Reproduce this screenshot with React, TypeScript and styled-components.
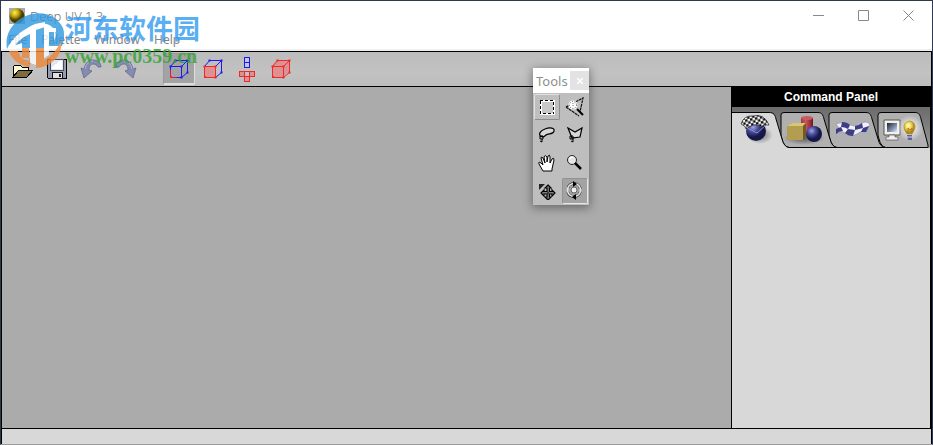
import React from "react";
import styled, { createGlobalStyle, css } from "styled-components";

const GlobalStyle = createGlobalStyle`
  * { box-sizing: border-box; }
  html, body, #root { height: 100%; margin: 0; }
  body { background: #a0a0a0; font-family: "Noto Sans", "Liberation Sans", sans-serif; overflow: hidden; }
  button { font: inherit; color: inherit; border: 0; padding: 0; background: none; }
  svg { display: block; flex: none; }
`;

const ui = css`
  font-family: "Noto Sans", sans-serif;
  font-size: 13px;
  font-weight: 300;
  color: #737373;
`;

const Window = styled.div`
  position: relative;
  height: 100vh;
  display: flex;
  flex-direction: column;
  border: 1px solid #2b3a4f;
  border-bottom-color: #9b9b9b;
`;

const Header = styled.header`
  ${ui}
  background: #fff;
  height: 50px;
  flex: none;
  border-bottom: 2px solid #f0f0f0;
`;

const TitleBar = styled.div`
  display: flex;
  align-items: center;
  height: 29px;
  padding: 0 1px 0 8px;
`;

const Title = styled.h1`
  font: inherit;
  margin: 0 auto 0 5px;
`;

const Caption = styled.button`
  width: 45px;
  height: 29px;
  display: grid;
  place-items: center;
`;

const Menus = styled.nav`
  display: flex;
  gap: 14px;
  padding-left: 7px;
  height: 20px;
  font-size: 12px;
  font-weight: 400;
  color: #858585;
  button { line-height: 20px; }
`;

const Frame = styled.div`
  flex: 1;
  min-height: 0;
  display: flex;
  flex-direction: column;
  border: 1px solid #000;
  border-bottom: 0;
`;

const Toolbar = styled.div`
  display: flex;
  gap: 2px;
  height: 35px;
  flex: none;
  padding: 1px 5px;
  background: linear-gradient(#bcbcbc, #c2c2c2 60%, #bdbdbd);
  border-bottom: 1px solid #000;
`;

const ToolButton = styled.button<{ $active?: boolean }>`
  width: 32px;
  height: 32px;
  display: grid;
  place-items: center;
  border-radius: 2px;
  ${(p) => p.$active && css`
    background: #a3a3a3;
    border: 1px solid #999;
    border-right-color: #ddd;
    border-bottom: 2px solid #ddd;
  `}
`;

const Spacer = styled.span`
  width: 18px;
`;

const Body = styled.div`
  flex: 1;
  min-height: 0;
  display: flex;
`;

const Canvas = styled.main`
  flex: 1;
  background: #ababab;
`;

const Panel = styled.aside`
  width: 200px;
  background: #d8d8d8;
  border: solid #000;
  border-width: 0 1px;
`;

const PanelTitle = styled.h2`
  margin: 0;
  height: 20px;
  font: bold 12px/20px "Liberation Sans", sans-serif;
  color: #fff;
  background: #000;
  text-align: center;
`;

const TabList = styled.div`
  display: grid;
  grid-template-columns: 48px 48px 49px 53px;
  height: 41px;
  background: linear-gradient(#6c6c6c, #777 30%, #999);
  overflow: hidden;
`;

const Tab = styled.button<{ $level: number }>`
  position: relative;
  z-index: ${(p) => p.$level};
  height: 41px;
  svg { overflow: visible; }
`;

const Status = styled.footer`
  height: 16px;
  flex: none;
  border-top: 1px solid #000;
  background: #d8d8d8;
`;

const Palette = styled.section`
  position: absolute;
  left: 532px;
  top: 67px;
  background: #bebebe;
  box-shadow: 0 2px 9px 1px rgba(0, 0, 0, 0.38);
`;

const PaletteTitle = styled.div`
  ${ui}
  font-weight: 400;
  color: #8f8f8f;
  display: flex;
  align-items: center;
  justify-content: space-between;
  height: 25px;
  padding-left: 3px;
  background: #fff;
`;

const PaletteClose = styled.button`
  width: 19px;
  height: 19px;
  display: grid;
  place-items: center;
  background: #e3e3e3;
`;

const PaletteGrid = styled.div`
  display: grid;
  grid-template-columns: 26px 26px;
  grid-auto-rows: 26px;
  gap: 2px;
  padding: 1px;
`;

const PaletteTool = styled.button<{ $look?: "raised" | "pressed" }>`
  display: grid;
  place-items: center;
  border: 1px solid transparent;
  border-radius: 2px;
  ${(p) => p.$look === "raised" && css`
    border-color: #e0e0e0 #8d8d8d #8d8d8d #e0e0e0;
  `}
  ${(p) => p.$look === "pressed" && css`
    background: #a3a3a3;
    border-color: #929292 #e6e6e6 #e6e6e6 #929292;
  `}
`;

const Watermark = styled.div`
  position: absolute;
  left: 4px;
  top: 9px;
  display: flex;
  pointer-events: none;
`;

const Brand = styled.div`
  display: flex;
  flex-direction: column;
`;

const BrandName = styled.span`
  font: bold 27px/36px "Noto Sans CJK SC", sans-serif;
  color: rgba(45, 153, 239, 0.78);
`;

const BrandUrl = styled.span`
  font: bold 20px/20px "Liberation Serif", serif;
  color: rgba(45, 162, 45, 0.78);
`;

const Logo = () => (
  <svg width="60" height="60" viewBox="0 0 60 60" opacity="0.8">
    <path d="M2 39C-1 22 10 8 27 4C41 1 53 7 58 18C60 24 59 31 57 36H46C51 30 53 22 47 17C41 12 33 13 25 17C14 22 6 30 2 39Z" fill="#2f98df" />
    <path d="M8 36C13 30 18 26 26 23V38H17V33Z" fill="#2f98df" />
    <path d="M31 19L39 16V38H31Z" fill="#2f98df" />
    <path d="M43 20H49V36H43Z" fill="#2f98df" />
    <path d="M4 41H13C15 47 18 50 24 52V38H17V48H25V57C15 56 7 50 4 41Z" fill="#ef8636" />
    <path d="M31 38H39V50C46 47 52 40 56 31C58 45 47 57 31 58Z" fill="#ef8636" />
    <path d="M3 38C8 28 17 20 30 14L40 12V17L31 20V55L25 53V24C18 27 11 32 9 38Z" fill="#fff" />
    <path d="M39 18H51V22H44V45L39 48Z" fill="#fff" />
  </svg>
);

const Folder = () => (
  <svg width="22" height="20" viewBox="0 0 22 20" shapeRendering="crispEdges">
    <path d="M9 4L12 1H15L18 4M18 1V4H15" fill="none" stroke="#a39cb0" />
    <path d="M1 17V8L3 6H8L10 8H16V11" fill="#fbfad1" stroke="#000" />
    <path d="M1 18L7 11H21L15 18Z" fill="#7d6c3d" stroke="#000" />
  </svg>
);

const Disk = () => (
  <svg width="20" height="20" viewBox="0 0 20 20" shapeRendering="crispEdges">
    <path d="M.5 .5H19.500V19.500H1.500L.5 18.500Z" fill="#969bb0" stroke="#000" />
    <path d="M3.500 .5H16.500V11.500H3.500Z" fill="#dfe8f2" stroke="#4a4c5c" />
    <path d="M5 8L13 2H15V10H5Z" fill="#fff" />
    <path d="M5.500 13.500H15.500V19.500H5.500Z" fill="#e1e1e1" stroke="#111" />
    <path d="M12 15H14V18H12Z" fill="#222" />
  </svg>
);

const Turn = ({ redo }: { redo?: boolean }) => (
  <svg width="22" height="20" viewBox="0 0 22 20" overflow="visible">
    <g transform={redo ? "translate(23 0) scale(-1 1)" : undefined}>
      <path d="M1 9L4 10C5 4 9 1 13 1C18 1 21 4 21 8L18 8C17 6 15 5 13 5C11 5 9 7 9 11L12 12L4 19Z" fill="#858bb2" stroke="#64698c" strokeWidth=".8" />
      <path d="M5 10C6 5 9 2 13 2" fill="none" stroke="#b3b7d1" />
    </g>
  </svg>
);

const BLUE = "#1a1af5";
const RED = "#f22727";

const Cube = ({ kind }: { kind: "edge" | "face" | "solid" }) => {
  const outer = kind === "solid" ? RED : BLUE;
  const front = kind === "edge" ? BLUE : RED;
  const corners = [[1, 7], [12, 7], [12, 18], [6, 1], [18, 1], [18, 13]];
  return (
    <svg width="20" height="20" viewBox="0 0 20 20">
      {kind === "solid" && <path d="M1 7L6 1H18V13L12 18H1Z" fill="#dc9292" />}
      <path d="M1.500 7.500L6.500 1.500H18.500V13.500L12.500 18.500M12.500 7.500L18.500 1.500" fill="none" stroke={outer} />
      <path d="M1.500 7.500H12.500V18.500H1.500Z" fill={kind === "edge" ? "none" : "#dc9292"} stroke={front} />
      {kind === "edge" && <path d="M1.500 11V18.500H8" fill="none" stroke="#d01a60" />}
      {corners.map(([x, y], i) => (
        <rect key={i} x={x - 0.5} y={y - 0.5} width="2" height="2" fill={i < 3 ? front : outer} />
      ))}
      <rect x="1" y="17" width="2" height="2" fill={RED} />
    </svg>
  );
};

const Unfold = () => (
  <svg width="18" height="27" viewBox="0 0 18 27" shapeRendering="crispEdges">
    <path d="M6.500 1.500H11.500V11.500H6.500ZM6.500 6.500H11.500" fill="#c5c5e0" stroke={BLUE} />
    <path d="M1.500 15.500H16.500V20.500H11.500V25.500H6.500V20.500H1.500ZM6.500 15.500V20.500H11.500V15.500M6.500 20.500H11.500" fill="#dc9292" stroke={RED} />
  </svg>
);

const Marquee = () => (
  <svg width="16" height="16" viewBox="0 0 16 16" shapeRendering="crispEdges">
    <path d="M1.500 1.500H14.500V14.500H1.500Z" fill="#c8c8c8" stroke="#fff" strokeWidth="2" />
    <path d="M1.500 1.500H14.500V14.500H1.500Z" fill="none" stroke="#000" strokeDasharray="3 2" strokeDashoffset="1" />
  </svg>
);

const Wand = () => (
  <svg width="20" height="20" viewBox="0 0 20 20">
    <path d="M1 10L18 1L15 15M1 10L14 19" fill="none" stroke="#111" strokeWidth="1.200" strokeDasharray="3 .6" />
    <circle cx="8" cy="8" r="4.500" fill="#fff" />
    <circle cx="8" cy="8" r="3.500" fill="none" stroke="#555" strokeDasharray="1 1.500" />
    <path d="M8 6V10" stroke="#777" strokeDasharray="1 1" />
    <path d="M12 12L18 18" stroke="#000" strokeWidth="2" />
  </svg>
);

const Lasso = () => (
  <svg width="18" height="18" viewBox="0 0 18 18">
    <path d="M3 11C0 8 2 5 7 3C12 1 17 2 16 5C15 9 10 7 8 9C6 11 4 11 3 10" fill="#d7d7d7" stroke="#000" strokeWidth="1.200" />
    <path d="M2 10H5V13H2ZM4 13V16L2 15" fill="none" stroke="#000" />
  </svg>
);

const PolyLasso = () => (
  <svg width="18" height="18" viewBox="0 0 18 18">
    <path d="M2 2L9 6L16 2L14 11L6 12Z" fill="#d7d7d7" stroke="#000" strokeWidth="1.200" />
    <path d="M4 10H7V13H4ZM7 12V16L5 15" fill="none" stroke="#000" />
  </svg>
);

const Hand = () => (
  <svg width="18" height="18" viewBox="0 0 18 18">
    <path d="M5 17L1 10Q0 7 3 9L5 11L3 4Q3 2 5 4L7 9L6 3Q7 0 9 3V8L10 2Q12 0 12 3V9L14 5Q16 3 16 6L14 15V17Z" fill="#fff" stroke="#000" />
  </svg>
);

const Magnifier = () => (
  <svg width="18" height="18" viewBox="0 0 18 18">
    <circle cx="6" cy="6" r="4.500" fill="#e5e5e5" stroke="#222" />
    <path d="M4 5Q4 3 7 3" stroke="#fff" strokeWidth="1.500" fill="none" />
    <path d="M9 9L15 15" stroke="#000" strokeWidth="2.500" />
  </svg>
);

const Move = () => (
  <svg width="18" height="18" viewBox="0 0 18 18">
    <path d="M1 2H7L1 8Z" fill="#222" />
    <path d="M10 3L13 6H11.500V9.500H14V8L17 11L14 14V12H11.500V15H13L10 18L7 15H9V12H6V14L3 11L6 8V9.500H9V6H7Z" fill="#fff" stroke="#000" strokeWidth="1.200" />
    <path d="M10 4V17M4 11H16" stroke="#000" />
  </svg>
);

const Rotate = () => (
  <svg width="20" height="22" viewBox="0 0 20 22">
    <circle cx="9" cy="10" r="6.500" fill="none" stroke="#222" strokeWidth="2.600" strokeDasharray="16 4.400" strokeDashoffset="-2" />
    <circle cx="9" cy="10" r="6.500" fill="none" stroke="#e2e2e2" strokeWidth="1.600" />
    <circle cx="9" cy="10" r="3" fill="#eee" stroke="#666" />
    <path d="M8 1L12 4L8 7ZM11 14L7 17L11 20Z" fill="#000" />
  </svg>
);

const TabShape = ({ children, active, last }: { children: React.ReactNode; active?: boolean; last?: boolean }) => (
  <svg width="48" height="41" viewBox="0 0 48 41">
    {active ? (
      <>
        <path d="M0 5.500H37C42 5.500 43 8 44 12L50 32Q52 40 57 41H0Z" fill="#d8d8d8" />
        <path d="M0 5.500H37C42 5.500 43 8 44 12L50 32Q52 40 57 40.500" fill="none" stroke="#000" />
      </>
    ) : (
      <path
        d={last
          ? "M1 28V8Q1 5.500 4 5.500H38C42 5.500 43 8 44 12L51 38V40.500H9Q4 40 2 32Z"
          : "M1 28V8Q1 5.500 4 5.500H38C42 5.500 43 8 44 12L50 32Q52 40 57 40.500H9Q4 40 2 32Z"}
        fill="#b0b0b0" stroke="#000"
      />
    )}
    {children}
  </svg>
);

const Defs = () => (
  <defs>
    <radialGradient id="orb" cx="35%" cy="30%">
      <stop offset="0" stopColor="#a2a5e3" /><stop offset=".5" stopColor="#4b4e9c" /><stop offset="1" stopColor="#17184a" />
    </radialGradient>
    <radialGradient id="bulb" cx="40%" cy="35%">
      <stop offset="0" stopColor="#fffce0" /><stop offset=".6" stopColor="#ead53c" /><stop offset="1" stopColor="#b48a20" />
    </radialGradient>
    <radialGradient id="glow">
      <stop offset="0" stopColor="#fff" /><stop offset="1" stopColor="#fff" stopOpacity="0" />
    </radialGradient>
    <radialGradient id="shade">
      <stop offset="0" stopOpacity=".5" /><stop offset="1" stopOpacity="0" />
    </radialGradient>
    <linearGradient id="can">
      <stop offset="0" stopColor="#a23540" /><stop offset=".4" stopColor="#cf5560" /><stop offset="1" stopColor="#6e1822" />
    </linearGradient>
    <linearGradient id="screen" x2="1" y2="1">
      <stop offset="0" stopColor="#1b2130" /><stop offset=".6" stopColor="#8490ad" /><stop offset="1" stopColor="#e6ecff" />
    </linearGradient>
    <pattern id="check" width="5" height="5" patternUnits="userSpaceOnUse" patternTransform="rotate(-12)">
      <rect width="5" height="5" fill="#fff" /><path d="M0 0H2.500V5H5V2.500H0Z" fill="#111" />
    </pattern>
  </defs>
);

const Cloth = () => (
  <TabShape active>
    <Defs />
    <ellipse cx="28" cy="28" rx="13" ry="9" fill="url(#shade)" />
    <circle cx="24" cy="24" r="10" fill="url(#orb)" />
    <path d="M15 21L25 26L34 18" fill="none" stroke="#8a8cd0" />
    <path d="M9 17Q12 8 21 9Q32 6 37 18Q31 17 29 20Q24 16 19 19L14 22Q14 19 9 17Z" fill="url(#check)" stroke="#222" strokeWidth=".7" />
  </TabShape>
);

const Solids = () => (
  <TabShape>
    <ellipse cx="24" cy="31" rx="21" ry="7" fill="url(#shade)" />
    <path d="M21 11V29H33V11Z" fill="url(#can)" /><ellipse cx="27" cy="11" rx="6" ry="2" fill="#c95a62" />
    <path d="M7 19L13 16H26L23 19V33H7Z" fill="#b39d50" /><path d="M7 19L13 16H26L23 19Z" fill="#d9c66f" />
    <path d="M23 19L26 16V29L23 33Z" fill="#6f5b25" />
    <circle cx="34" cy="27" r="8" fill="url(#orb)" />
  </TabShape>
);

const Flag = () => (
  <TabShape>
    <path d="M8 17Q14 14 20 17Q29 21 33 17Q37 13 42 17L38 25Q33 23 29 27Q22 31 17 26Q13 23 8 27L11 21Z" fill="#f0f0f8" stroke="#8587ac" strokeWidth=".6" />
    <path d="M14 15Q19 15 22 18L20 22Q17 20 13 20ZM8 22L13 20L15 24Q11 24 8 27ZM20 22L27 23L25 29Q20 29 17 26ZM27 19Q31 19 34 16L35 21L27 23ZM35 21L41 19L38 25L33 25Z" fill="#3b3d86" />
  </TabShape>
);

const Display = () => (
  <TabShape last>
    <path d="M7 13H23V28H7Z" fill="#f1f1eb" stroke="#555" /><path d="M10 16H20V25H10Z" fill="url(#screen)" />
    <path d="M12 28H18V30H21V33H9V30H12Z" fill="#eee" stroke="#555" strokeWidth=".7" />
    <circle cx="33" cy="21" r="13" fill="url(#glow)" />
    <path d="M30 27Q26 22 27 18Q29 14 33 14Q38 15 38 20Q38 23 35 27Z" fill="url(#bulb)" stroke="#a9822a" strokeWidth=".6" />
    <path d="M31 26L31 21L33 23L35 21V26" fill="none" stroke="#af7b26" /><path d="M30 28H35V33H31Z" fill="#5c6593" /><path d="M30 30H35" stroke="#d0d5eb" />
  </TabShape>
);

const files = [
  { label: "Open", icon: <Folder /> },
  { label: "Save", icon: <Disk /> },
  { label: "Undo", icon: <Turn /> },
  { label: "Redo", icon: <Turn redo /> },
];
const views = [
  { label: "Edges", icon: <Cube kind="edge" />, active: true },
  { label: "Faces", icon: <Cube kind="face" /> },
  { label: "Unfold", icon: <Unfold /> },
  { label: "Solid", icon: <Cube kind="solid" /> },
];
const tools: { label: string; icon: React.ReactNode; look?: "raised" | "pressed" }[] = [
  { label: "Marquee", icon: <Marquee />, look: "raised" },
  { label: "Wand", icon: <Wand /> },
  { label: "Lasso", icon: <Lasso /> },
  { label: "Polygon lasso", icon: <PolyLasso /> },
  { label: "Pan", icon: <Hand /> },
  { label: "Zoom", icon: <Magnifier /> },
  { label: "Move", icon: <Move /> },
  { label: "Rotate", icon: <Rotate />, look: "pressed" },
];
const tabs = [
  { label: "Mapping", icon: <Cloth /> },
  { label: "Objects", icon: <Solids /> },
  { label: "Texture", icon: <Flag /> },
  { label: "Display", icon: <Display /> },
];

export default function App() {
  return (
    <>
      <GlobalStyle />
      <Window>
        <Header>
          <TitleBar>
            <svg width="16" height="16" viewBox="0 0 16 16">
              <defs>
                <radialGradient id="gold" cx="35%" cy="28%">
                  <stop offset="0" stopColor="#ffee58" /><stop offset=".5" stopColor="#c5a90a" /><stop offset="1" stopColor="#4b3d00" />
                </radialGradient>
              </defs>
              <rect width="16" height="16" fill="#aaa" />
              <circle cx="8" cy="8" r="7.500" fill="url(#gold)" />
            </svg>
            <Title>Deep UV 1.3</Title>
            <Caption aria-label="Minimize"><svg width="11" height="11" stroke="#888"><path d="M0 5.500H11" /></svg></Caption>
            <Caption aria-label="Maximize"><svg width="11" height="11" stroke="#888" fill="none"><path d="M.5 .5H10.500V10.500H.5Z" /></svg></Caption>
            <Caption aria-label="Close"><svg width="11" height="11" stroke="#888"><path d="M.5 .5L10.500 10.500M10.500 .5L.5 10.500" /></svg></Caption>
          </TitleBar>
          <Menus>
            {["File", "Palette", "Window", "Help"].map((m) => <button key={m}>{m}</button>)}
          </Menus>
        </Header>
        <Frame>
          <Toolbar role="toolbar">
            {files.map((b) => <ToolButton key={b.label} aria-label={b.label}>{b.icon}</ToolButton>)}
            <Spacer />
            {views.map((b) => <ToolButton key={b.label} aria-label={b.label} $active={b.active}>{b.icon}</ToolButton>)}
          </Toolbar>
          <Body>
            <Canvas />
            <Panel>
              <PanelTitle>Command Panel</PanelTitle>
              <TabList role="tablist">
                {tabs.map((t, i) => (
                  <Tab key={t.label} role="tab" aria-label={t.label} aria-selected={i === 0} $level={4 - i}>{t.icon}</Tab>
                ))}
              </TabList>
            </Panel>
          </Body>
          <Status />
        </Frame>
        <Palette>
          <PaletteTitle>
            <span>Tools</span>
            <PaletteClose aria-label="Close tools">
              <svg width="6" height="6" stroke="#fff" strokeWidth="1.500"><path d="M0 0L6 6M6 0L0 6" /></svg>
            </PaletteClose>
          </PaletteTitle>
          <PaletteGrid>
            {tools.map((t) => <PaletteTool key={t.label} aria-label={t.label} $look={t.look}>{t.icon}</PaletteTool>)}
          </PaletteGrid>
        </Palette>
        <Watermark>
          <Logo />
          <Brand>
            <BrandName>河东软件园</BrandName>
            <BrandUrl>www.pc0359.cn</BrandUrl>
          </Brand>
        </Watermark>
      </Window>
    </>
  );
}
